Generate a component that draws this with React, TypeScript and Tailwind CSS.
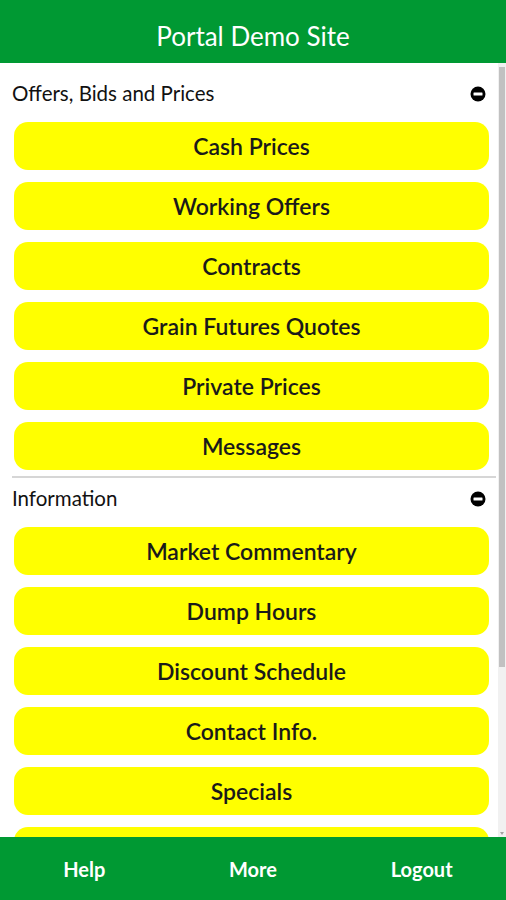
import React from 'react';

interface Section {
  title: string;
  items: string[];
}

const sections: Section[] = [
  {
    title: 'Offers, Bids and Prices',
    items: ['Cash Prices', 'Working Offers', 'Contracts', 'Grain Futures Quotes', 'Private Prices', 'Messages'],
  },
  {
    title: 'Information',
    items: ['Market Commentary', 'Dump Hours', 'Discount Schedule', 'Contact Info.', 'Specials', 'Weather', 'Links'],
  },
];

// Collapse indicator: black disc with a white bar
function MinusCircle() {
  return (
    <svg width="16" height="16" viewBox="0 0 16 16" aria-hidden="true">
      <circle cx="8" cy="8" r="7.5" fill="#000" />
      <rect x="3.5" y="6.5" width="9" height="3" rx="0.5" fill="#fff" />
    </svg>
  );
}

export default function App() {
  return (
    <div className="flex flex-col h-[900px] w-full bg-white font-['Lato','Liberation_Sans',sans-serif] overflow-hidden">
      {/* Header */}
      <header className="h-[63px] shrink-0 bg-[#009933] flex items-center justify-center pt-[8px]">
        <h1 className="text-white text-[26px] leading-none">Portal Demo Site</h1>
      </header>

      {/* Scrolling menu */}
      <main className="relative flex-1 overflow-hidden">
        <div className="pt-[10px] pb-[12px] pr-[8px]">
          {sections.map((section, i) => (
            <div key={section.title}>
              {i > 0 && <div className="mt-[6px] ml-[12px] mr-[2px] h-[2px] bg-[#d6d6d6]" />}
              <div className="h-[41px] flex items-center justify-between pl-[12px] pr-[12px]">
                <span className="text-[20.5px] text-[#111]">{section.title}</span>
                <MinusCircle />
              </div>
              <div className="flex flex-col gap-[12px] mt-[8px] ml-[14px] mr-[9px]">
                {section.items.map((item) => (
                  <button
                    key={item}
                    className="h-[48px] rounded-[14px] bg-[#ffff00] text-[23px] font-semibold text-[#1a1a1a] flex items-center justify-center"
                  >
                    {item}
                  </button>
                ))}
              </div>
            </div>
          ))}
        </div>

        {/* Scrollbar overlay */}
        <div className="absolute top-0 right-0 bottom-0 w-[8px] bg-[#f1f1f1] flex flex-col">
          <div className="mt-[4px] h-[600px] mx-[1px] bg-[#c1c1c1]" />
          <div className="mt-auto mb-[2px] self-center w-0 h-0 border-l-[2px] border-r-[2px] border-t-[3px] border-l-transparent border-r-transparent border-t-[#a3a3a3]" />
        </div>
      </main>

      {/* Footer nav */}
      <footer className="h-[63px] shrink-0 bg-[#009933] grid grid-cols-3 items-center">
        <span className="text-center text-white text-[20px] font-bold">Help</span>
        <span className="text-center text-white text-[20px] font-bold">More</span>
        <span className="text-center text-white text-[20px] font-bold">Logout</span>
      </footer>
    </div>
  );
}
